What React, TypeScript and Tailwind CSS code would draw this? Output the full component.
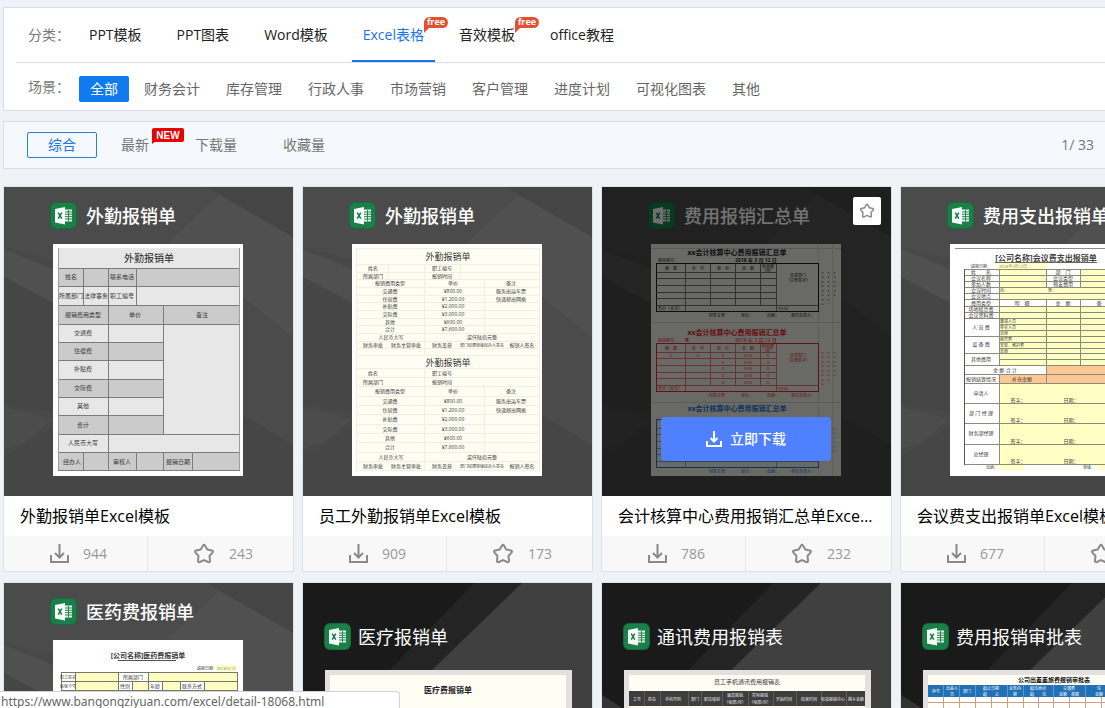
import React from "react";

type Anchor = "start" | "middle" | "end";

const INK = "#3a3a3a";

function T({
  x,
  y,
  s = 6,
  a = "middle",
  c = INK,
  b = false,
  children,
}: {
  x: number;
  y: number;
  s?: number;
  a?: Anchor;
  c?: string;
  b?: boolean;
  children: React.ReactNode;
}) {
  return (
    <text x={x} y={y} fontSize={s} textAnchor={a} fill={c} fontWeight={b ? 700 : 400} dominantBaseline="central">
      {children}
    </text>
  );
}

function H({ ys, x1, x2, c }: { ys: number[]; x1: number; x2: number; c: string }) {
  return <path d={ys.map((y) => `M${x1} ${y + 0.5}H${x2}`).join("")} stroke={c} fill="none" />;
}

function V({ xs, y1, y2, c }: { xs: number[]; y1: number; y2: number; c: string }) {
  return <path d={xs.map((x) => `M${x + 0.5} ${y1}V${y2}`).join("")} stroke={c} fill="none" />;
}

function ExcelMark({ x, y }: { x: number; y: number }) {
  return (
    <g transform={`translate(${x} ${y})`}>
      <rect width="27" height="27" rx="6" fill="#146c3c" />
      <rect x="1" y="1" width="25" height="25" rx="5" fill="#1a7f48" />
      <path d="M14 7.500h8v12H14z" fill="#e6f1ea" />
      <path d="M15 10h7M15 12.300h7M15 14.600h7M15 17h7M18.500 8v11" stroke="#1a7f48" strokeWidth="0.9" />
      <path d="M5 7l10-2v17.500L5 20.500z" fill="#f4faf6" />
      <path d="M8.200 10.600l3.600 6M11.800 10.600l-3.600 6" stroke="#187a45" strokeWidth="1.5" />
    </g>
  );
}

function GreyBackdrop() {
  return (
    <g>
      <rect width="289" height="309" fill="#484848" />
      <path d="M0 0H289V190L200 110L0 60z" fill="#4b4b4b" />
      <path d="M165 55L215 8L289 50V180L240 120z" fill="#505050" />
      <path d="M203 0H289V50z" fill="#454545" />
      <path d="M0 62L49 82V116L0 90z" fill="#505050" />
      <path d="M0 90L49 116V225L0 218z" fill="#464646" />
      <path d="M0 220L49 232L20 256L0 262z" fill="#4c4c4c" />
      <path d="M239 228L289 258V309H0V270L49 240z" fill="#464646" />
      <path d="M239 110L289 150V258L239 228z" fill="#4b4b4b" />
    </g>
  );
}

function DarkBackdrop() {
  return (
    <g>
      <rect width="289" height="309" fill="#1a1a1a" />
      <path d="M171 0H289V309H0V176z" fill="#242424" />
      <path d="M219 0H289V309H0V212z" fill="#404040" />
      <path d="M0 112L22 126V309H0z" fill="#333333" />
    </g>
  );
}

function Art({ title, dark, children }: { title: string; dark?: boolean; children: React.ReactNode }) {
  return (
    <svg viewBox="0 0 289 309" className="block w-full" role="img" aria-label={title}>
      {dark ? <DarkBackdrop /> : <GreyBackdrop />}
      {dark ? <ExcelMark x={21} y={40} /> : <ExcelMark x={46} y={15} />}
      <text x={dark ? 55 : 82} y={dark ? 54 : 29} fontSize="18" fontWeight={dark ? 400 : 500} fill="#ffffff" dominantBaseline="central">
        {title}
      </text>
      {dark ? (
        <g>
          <rect x="22" y="87" width="247" height="222" fill="#e4e0df" />
          <rect x="27" y="92" width="236" height="217" fill="#fdfdf4" />
        </g>
      ) : (
        <rect x="49" y="57" width="190" height="232" fill="#ffffff" />
      )}
      {children}
    </svg>
  );
}

function FieldworkSheet() {
  const line = "#7c7c7c";
  const labels: [string, number][] = [
    ["交通费", 146],
    ["住宿费", 164],
    ["补贴费", 182],
    ["交际费", 201],
    ["其他", 219],
    ["合计", 238],
  ];
  return (
    <g>
      <rect x="54" y="61" width="182" height="222" fill="#e7e7e7" />
      <path d="M54 81H236V99H54zM54 118H236V137H54zM54 155H159V173H54zM54 192H159V210H54zM54 228H159V247H54zM54 265H236V283H54z" fill="#cbcbcb" />
      <H ys={[81, 99, 118, 137, 247, 265, 283]} x1={54} x2={236} c={line} />
      <H ys={[155, 173, 192, 210, 228]} x1={54} x2={159} c={line} />
      <V xs={[79, 132]} y1={81} y2={118} c={line} />
      <V xs={[104]} y1={81} y2={283} c={line} />
      <V xs={[159]} y1={118} y2={247} c={line} />
      <V xs={[79, 132, 159, 188]} y1={265} y2={283} c={line} />
      <V xs={[54, 235]} y1={61} y2={283} c="#9c9c9c" />
      <T x={145} y={71} s={10} c="#222222">外勤报销单</T>
      <T x={67} y={90}>姓名</T>
      <T x={118} y={90}>联系电话</T>
      <T x={67} y={109}>所属部门</T>
      <T x={92} y={109}>法律事务</T>
      <T x={118} y={109}>职工编号</T>
      <T x={79} y={128}>报销费用类型</T>
      <T x={131} y={128}>单价</T>
      <T x={198} y={128}>备注</T>
      {labels.map(([text, y]) => (
        <T key={text} x={79} y={y}>{text}</T>
      ))}
      <T x={79} y={256}>人民币大写</T>
      <T x={68} y={275}>经办人</T>
      <T x={118} y={275}>审核人</T>
      <T x={174} y={275}>报销日期</T>
    </g>
  );
}

function ClaimBlock({ ys }: { ys: number[] }) {
  const rows: [string, string, string][] = [
    ["交通费", "¥800.00", "服务出运车票"],
    ["住宿费", "¥1,200.00", "快递邮出网络"],
    ["补贴费", "¥2,000.00", ""],
    ["交际费", "¥3,000.00", ""],
    ["其他", "¥600.00", ""],
    ["合计", "¥7,600.00", ""],
  ];
  return (
    <g>
      <T x={145} y={ys[0]} s={9}>外勤报销单</T>
      <T x={70} y={ys[1]} s={5}>姓名</T>
      <T x={139} y={ys[1]} s={5}>职工编号</T>
      <T x={70} y={ys[2]} s={5}>所属部门</T>
      <T x={139} y={ys[2]} s={5}>报销时间</T>
      <T x={87} y={ys[3]} s={5}>报销费用类型</T>
      <T x={150} y={ys[3]} s={5}>单价</T>
      <T x={208} y={ys[3]} s={5}>备注</T>
      {rows.map(([name, sum, note], i) => (
        <g key={name}>
          <T x={87} y={ys[4 + i]} s={5}>{name}</T>
          <T x={150} y={ys[4 + i]} s={5}>{sum}</T>
          {note && <T x={208} y={ys[4 + i]} s={5}>{note}</T>}
        </g>
      ))}
      <T x={88} y={ys[10]} s={5}>人民币大写</T>
      <T x={179} y={ys[10]} s={5}>柒仟陆佰元整</T>
      <T x={70} y={ys[11]} s={5}>财务审批</T>
      <T x={103} y={ys[11]} s={5}>财务主管审批</T>
      <T x={139} y={ys[11]} s={5}>财务盖章</T>
      <T x={179} y={ys[11]} s={4}>部门经理审核经办人签名</T>
      <T x={219} y={ys[11]} s={5}>报销人签名</T>
    </g>
  );
}

function StaffSheet() {
  const line = "#f3f0da";
  return (
    <g>
      <rect x="53" y="61" width="183" height="222" fill="#fdfdf3" />
      <H ys={[61, 77, 85, 92, 100, 108, 115, 123, 131, 138, 146, 154, 161, 168, 181, 190, 199, 209, 218, 227, 237, 246, 255, 265, 274, 283]} x1={53} x2={236} c={line} />
      <V xs={[53, 236]} y1={61} y2={283} c={line} />
      <V xs={[121]} y1={77} y2={168} c={line} />
      <V xs={[121]} y1={181} y2={283} c={line} />
      <V xs={[85, 157]} y1={77} y2={92} c={line} />
      <V xs={[181]} y1={92} y2={146} c={line} />
      <V xs={[181]} y1={199} y2={265} c={line} />
      <ClaimBlock ys={[69, 81, 89, 96, 104, 112, 119, 127, 135, 142, 150, 158]} />
      <ClaimBlock ys={[175, 186, 195, 204, 214, 223, 232, 242, 251, 260, 270, 279]} />
    </g>
  );
}

function SummaryBlock({ dy, c, filled, brief }: { dy: number; c: string; filled?: boolean; brief?: boolean }) {
  return (
    <g transform={`translate(0 ${dy})`}>
      <T x={135} y={65} s={7} c={c} b>xx会计核算中心费用报销汇总单</T>
      {!brief && (
        <g>
          <T x={66} y={73} s={4} c={c}>报销单位：</T>
          {filled && <T x={85} y={73} s={4} c={c} b>章</T>}
          <T x={154} y={73} s={5} c={c} b={!filled}>2018 年 3 月 12 日</T>
        </g>
      )}
      <rect x="54.500" y="76.500" width="162" height="48" fill="none" stroke={c} />
      <g opacity="0.6">
        <H ys={[85, 91, 98, 105, 111]} x1={54} x2={174} c={c} />
        <H ys={[118]} x1={54} x2={216} c={c} />
        <V xs={[83]} y1={76} y2={124} c={c} />
        <V xs={[108, 133, 158]} y1={76} y2={118} c={c} />
        <V xs={[174]} y1={76} y2={124} c={c} />
      </g>
      {!brief && (
        <g>
          <T x={69} y={81} s={4} c={c}>摘　要</T>
          <T x={96} y={81} s={4} c={c}>外　币</T>
          <T x={121} y={81} s={4} c={c}>单　价</T>
          <T x={146} y={81} s={4} c={c}>金　额</T>
          <T x={166} y={79} s={4} c={c}>附单据</T>
          <T x={166} y={83} s={4} c={c}>（张）</T>
          <T x={196} y={88} s={4} c={c}>负责部门</T>
          <T x={196} y={93} s={4} c={c}>（主管签字）</T>
          {filled && <T x={69} y={88} s={4} c={c}>0</T>}
          {filled && <T x={96} y={88} s={4} c={c}>0</T>}
          {filled &&
            [88, 95, 101, 108, 115].map((y) => (
              <g key={y}>
                <T x={121} y={y} s={4} c={c}>0</T>
                <T x={146} y={y} s={4} c={c}>0.00</T>
                <T x={166} y={y} s={4} c={c}>0</T>
              </g>
            ))}
          <T x={68} y={121} s={4} c={c}>合计（大写）</T>
          <T x={181} y={121} s={4} c={c}>¥0.00</T>
        </g>
      )}
      <path d="M220.500 85v34M226.500 85v32M232.500 85v26" stroke={c} strokeWidth="1.500" strokeDasharray="1.500 3" opacity="0.5" />
      <T x={115} y={128} s={4} c={c}>财务主管</T>
      <T x={145} y={128} s={4} c={c}>审计：</T>
      <T x={171} y={128} s={4} c={c}>出纳：</T>
      <T x={201} y={128} s={4} c={c}>单位负责人：</T>
    </g>
  );
}

function SummarySheet() {
  return (
    <g>
      <rect x="49" y="57" width="190" height="232" fill="#e8e8e2" />
      <H ys={[61, 135, 215]} x1={49} x2={239} c="#c8c8c2" />
      <V xs={[216, 230]} y1={57} y2={289} c="#d0d0ca" />
      <SummaryBlock dy={0} c="#1c1c1c" />
      <SummaryBlock dy={80} c="#e02424" filled />
      <SummaryBlock dy={156} c="#1f70d0" brief />
    </g>
  );
}

function MeetingSheet() {
  const line = "#8c8c7c";
  const left: [string, number][] = [
    ["姓　　名", 85],
    ["会议名称", 91],
    ["参加人数", 97],
    ["会议时间", 103],
    ["会议地点", 109],
    ["费用类型", 116],
    ["场地租赁费", 122],
    ["会议资料费", 128],
    ["人 员 费", 140],
    ["设 备 费", 157],
    ["其他费用", 172],
    ["申请人", 206],
    ["部 门 经 理", 226],
    ["财务部经理", 246],
    ["总经理", 267],
  ];
  const items: [string, number][] = [
    ["邀请人员", 134],
    ["参会人员", 140],
    ["其他", 146],
    ["租赁费", 152],
    ["安装、维护费", 158],
    ["其他", 164],
  ];
  return (
    <g>
      <H ys={[61]} x1={54} x2={235} c="#8c8c8c" />
      <T x={145} y={70} s={8} b c="#444444">[公司名称]会议费支出报销单</T>
      <path d="M94 75.500h102" stroke="#666666" />
      <T x={80} y={79} s={4}>填报日期：</T>
      <path d="M97 76h49v6H97z" fill="#ffffc8" />
      <T x={98} y={79} s={4} a="start" c="#8a8a50">2018年5月12日</T>
      <path d="M98 82h128v195H98zM97 278h26v5H97zM196 278h30v5h-30z" fill="#ffffc4" />
      <path d="M145 82h34v18h-34zM98 112h128v7H98z" fill="#ffffff" />
      <path d="M145 178h81v9h-81zM98 187h128v9H98z" fill="#fdc793" />
      <path d="M63 178h82v9H63z" fill="#ffffff" />
      <H ys={[82, 88, 94, 100, 106, 112, 119, 125, 131, 166, 178, 187, 196, 216, 236, 257, 277]} x1={63} x2={226} c={line} />
      <H ys={[149]} x1={63} x2={226} c={line} />
      <H ys={[137, 143, 155, 161, 172]} x1={98} x2={226} c={line} />
      <V xs={[63, 226]} y1={82} y2={278} c="#555555" />
      <V xs={[98]} y1={82} y2={178} c={line} />
      <V xs={[98]} y1={187} y2={277} c={line} />
      <V xs={[145, 179]} y1={82} y2={100} c={line} />
      <V xs={[145, 179]} y1={112} y2={178} c={line} />
      <V xs={[145]} y1={178} y2={196} c={line} />
      {left.map(([text, y]) => (
        <T key={text} x={80} y={y} s={5}>{text}</T>
      ))}
      <T x={162} y={85} s={5}>部　门</T>
      <T x={162} y={91} s={5}>会议类型</T>
      <T x={162} y={97} s={5}>预支费用</T>
      <T x={99} y={103} s={4} a="start">自：</T>
      <T x={147} y={103} s={4} a="start">至：</T>
      <T x={121} y={116} s={5}>明　细</T>
      <T x={162} y={116} s={5}>金　额</T>
      <T x={198} y={116} s={5}>备</T>
      {items.map(([text, y]) => (
        <T key={y} x={99} y={y} s={4} a="start">{text}</T>
      ))}
      <T x={104} y={183} s={5}>金 额 合 计</T>
      <T x={80} y={192} s={5}>报销结算情况</T>
      <T x={121} y={192} s={5}>补充金额</T>
      {[213, 233, 254, 274].map((y) => (
        <g key={y}>
          <T x={117} y={y} s={5}>签字：</T>
          <T x={170} y={y} s={5}>日期：</T>
        </g>
      ))}
      <T x={91} y={280} s={4}>出纳：</T>
      <T x={188} y={280} s={4}>审核：</T>
    </g>
  );
}

function MedicineSheet() {
  const line = "#77776c";
  return (
    <g>
      <T x={144} y={72} s={7} b>[公司名称]医药费报销单</T>
      <path d="M114 77.500h58" stroke="#555555" />
      <T x={203} y={85} s={4}>填报日期：</T>
      <path d="M213 82h19v6h-19z" fill="#ffffc4" />
      <T x={222} y={85} s={4} c="#8a8a50">2018/5/12</T>
      <path d="M57 89h176v52H57z" fill="#ffffc4" />
      <path d="M57 89h14v52H57zM114 89h30v9h-30zM114 98h14v9h-14zM144 98h14v9h-14zM176 98h24v9h-24z" fill="#ffffff" />
      <H ys={[89, 98, 107, 116]} x1={57} x2={233} c={line} />
      <V xs={[57, 71, 114, 233]} y1={89} y2={141} c={line} />
      <V xs={[144]} y1={89} y2={107} c={line} />
      <V xs={[128, 158, 176, 200]} y1={98} y2={107} c={line} />
      <T x={64} y={94} s={4}>职工姓名</T>
      <T x={129} y={94} s={5}>所属部门</T>
      <T x={64} y={103} s={4}>医保卡号</T>
      <T x={121} y={103} s={5}>性别</T>
      <T x={151} y={103} s={5}>年龄</T>
      <T x={188} y={103} s={5}>联系方式</T>
    </g>
  );
}

function TreatmentSheet() {
  return <T x={145} y={106} s={8} b c="#222222">医疗费报销单</T>;
}

function PhoneSheet() {
  const heads: [string, number][] = [
    ["工号", 35],
    ["姓名", 50],
    ["手机号码", 71],
    ["部门", 93],
    ["职位级别", 110],
    ["开始时间", 182],
    ["结束时间", 207],
    ["有效报销中心", 231],
    ["剩余金额", 254],
  ];
  return (
    <g>
      <T x={145} y={99} s={6}>员工手机通讯费用报销表</T>
      <rect x="27" y="108" width="236" height="15" fill="#3e3e3e" />
      <V xs={[42, 58, 86, 99, 120, 146, 171, 194, 219, 244]} y1={108} y2={123} c="#5c5c5c" />
      {heads.map(([text, x]) => (
        <T key={text} x={x} y={116} s={4} c="#ececec">{text}</T>
      ))}
      <T x={133} y={112} s={4} c="#ececec">最高报销</T>
      <T x={133} y={119} s={4} c="#ececec">（每部/月）</T>
      <T x={158} y={112} s={4} c="#ececec">实际报销</T>
      <T x={158} y={119} s={4} c="#ececec">（每部/月）</T>
    </g>
  );
}

function TravelSheet() {
  const stacked: [string, string, number][] = [
    ["出差人", "员", 51],
    ["起止日期", "起　　止", 90],
    ["业务内", "容", 114],
    ["起讫地点", "起　　讫", 137],
    ["交通费", "金额　单据", 168],
    ["住", "金额", 198],
  ];
  return (
    <g>
      <T x={153} y={97} s={6} b c="#111111">公司出差差旅费报销审批表</T>
      <rect x="27" y="102" width="236" height="12" fill="#2270b6" />
      <rect x="27" y="114" width="236" height="30" fill="#fffefa" />
      <H ys={[119, 125]} x1={27} x2={263} c="#c9a08c" />
      <V xs={[42, 58, 74, 90, 106, 122, 137, 152, 168, 184, 200]} y1={114} y2={140} c="#c9a08c" />
      <V xs={[42, 58, 74, 106, 122, 152, 184]} y1={102} y2={114} c="#5a97cc" />
      <T x={35} y={108} s={4} c="#ffffff">序号</T>
      <T x={66} y={108} s={4} c="#ffffff">部门</T>
      {stacked.map(([top, bottom, x]) => (
        <g key={top}>
          <T x={x} y={105} s={4} c="#ffffff">{top}</T>
          <T x={x} y={111} s={4} c="#ffffff">{bottom}</T>
        </g>
      ))}
    </g>
  );
}

function DownloadIcon() {
  return (
    <svg width="19" height="19" viewBox="0 0 19 19" fill="none" stroke="currentColor" strokeWidth="2" aria-hidden="true">
      <path d="M1 11v7h17v-7M9.500 0v13M5 9l4.500 4.500L14 9" />
    </svg>
  );
}

function StarIcon({ size = 22 }: { size?: number }) {
  return (
    <svg width={size} height={size} viewBox="0 0 22 22" fill="none" stroke="currentColor" strokeWidth="2" strokeLinejoin="round" aria-hidden="true">
      <path d="M9.900 2.700Q11 .9 12.100 2.700L14.300 6.600L18.800 7.500Q20.800 8 19.500 9.600L16.500 13L17 17.600Q17.100 19.800 15.100 19L11 17.100L6.900 19Q4.900 19.800 5 17.600L5.500 13L2.500 9.600Q1.200 8 3.200 7.500L7.700 6.600z" />
    </svg>
  );
}

function FreeBadge() {
  return (
    <span className="absolute -top-2 left-full h-[11px] w-6 rounded-t-md rounded-br-md bg-[#e2502f] text-center text-[9px] leading-[10px] font-bold text-white">
      free
      <svg className="absolute top-full left-0" width="5" height="5" viewBox="0 0 5 5" aria-hidden="true">
        <path d="M0 0h5L0 5z" fill="#e2502f" />
      </svg>
    </span>
  );
}

const categories = [
  { name: "PPT模板" },
  { name: "PPT图表" },
  { name: "Word模板" },
  { name: "Excel表格", active: true, free: true },
  { name: "音效模板", free: true },
  { name: "office教程" },
];

const scenes = ["全部", "财务会计", "库存管理", "行政人事", "市场营销", "客户管理", "进度计划", "可视化图表", "其他"];

interface Template {
  cover: string;
  dark?: boolean;
  sheet: React.ReactNode;
  name?: string;
  downloads?: number;
  stars?: number;
  hovered?: boolean;
}

const templates: Template[] = [
  { cover: "外勤报销单", sheet: <FieldworkSheet />, name: "外勤报销单Excel模板", downloads: 944, stars: 243 },
  { cover: "外勤报销单", sheet: <StaffSheet />, name: "员工外勤报销单Excel模板", downloads: 909, stars: 173 },
  { cover: "费用报销汇总单", sheet: <SummarySheet />, name: "会计核算中心费用报销汇总单Excel模板", downloads: 786, stars: 232, hovered: true },
  { cover: "费用支出报销单", sheet: <MeetingSheet />, name: "会议费支出报销单Excel模板", downloads: 677, stars: 156 },
  { cover: "医药费报销单", sheet: <MedicineSheet /> },
  { cover: "医疗报销单", sheet: <TreatmentSheet />, dark: true },
  { cover: "通讯费用报销表", sheet: <PhoneSheet />, dark: true },
  { cover: "费用报销审批表", sheet: <TravelSheet />, dark: true },
];

function Card({ item }: { item: Template }) {
  return (
    <article className="border border-[#dde1e8] bg-white">
      <div className="relative">
        <Art title={item.cover} dark={item.dark}>
          {item.sheet}
        </Art>
        {item.hovered && (
          <div className="absolute inset-0 bg-black/55">
            <button type="button" aria-label="收藏" className="absolute top-[10px] right-[10px] flex h-7 w-7 items-center justify-center rounded-xs bg-white text-[#8a8a8a]">
              <StarIcon size={16} />
            </button>
            <button type="button" className="absolute bottom-[35px] left-[59px] flex h-11 w-[170px] items-center justify-center gap-2 rounded bg-[#4f80ff] text-sm font-medium text-white">
              <svg width="16" height="16" viewBox="0 0 16 16" fill="none" stroke="currentColor" strokeWidth="2" aria-hidden="true">
                <path d="M1 10v5h14v-5M8 0v10M4.500 7L8 10.500L11.500 7" />
              </svg>
              立即下载
            </button>
          </div>
        )}
      </div>
      {item.name && (
        <>
          <h3 className="h-10 truncate px-4 text-base leading-10 text-black">
            <a href="#detail">{item.name}</a>
          </h3>
          <div className="grid h-[35px] grid-cols-[144px_1fr] bg-[#f8f8f9] text-sm text-[#999]">
            <span className="flex items-center gap-[14px] border-r border-[#e8eaee] pl-[46px]">
              <span className="text-[#8a8a8a]"><DownloadIcon /></span>
              {item.downloads}
            </span>
            <span className="flex items-center gap-[14px] pl-[45px]">
              <span className="text-[#8a8a8a]"><StarIcon /></span>
              {item.stars}
            </span>
          </div>
        </>
      )}
    </article>
  );
}

export default function App() {
  return (
    <div className="relative h-screen overflow-hidden bg-[#eff2f6] pt-[7px] pl-[3px] font-['Open_Sans','Noto_Sans_CJK_SC',sans-serif] text-sm text-[#666]">
      <section className="border border-r-0 border-[#d5dcea] bg-white pl-3">
        <div className="flex h-[55px] items-center border-b border-[#d5dcea] pl-3">
          <span className="w-[50px] text-[#777]">分类：</span>
          <nav className="flex gap-[13px] self-stretch text-[#222]">
            {categories.map((c) => (
              <a
                key={c.name}
                href="#category"
                className={
                  c.active
                    ? "flex items-center border-t-2 border-b-2 border-t-transparent border-b-[#1a73e8] px-[11px] text-[#1a73e8]"
                    : "flex items-center border-y-2 border-transparent px-[11px]"
                }
              >
                <span className="relative">
                  {c.name}
                  {c.free && <FreeBadge />}
                </span>
              </a>
            ))}
          </nav>
        </div>
        <div className="flex h-[47px] items-center pl-3">
          <span className="w-[51px] text-[#777]">场景：</span>
          <nav className="flex gap-1 pt-1">
            {scenes.map((s, i) => (
              <a key={s} href="#scene" className={i === 0 ? "rounded-xs bg-[#0f7bef] px-[11px] leading-[26px] text-white" : "px-[11px] leading-[26px]"}>
                {s}
              </a>
            ))}
          </nav>
        </div>
      </section>

      <section className="mt-[10px] flex h-12 items-center border border-r-0 border-[#d5dcea] bg-[#f5f9fd] pr-[11px] pl-[23px] text-[#777]">
        <button type="button" className="h-[26px] w-[70px] rounded-xs border border-[#2d7fd6] text-[#1a73e8]">
          综合
        </button>
        <button type="button" className="relative ml-6">
          最新
          <span className="absolute -top-[7px] left-[31px] h-[14px] w-8 rounded-xs bg-[#e60000] text-center font-['Liberation_Sans',sans-serif] text-[10px] leading-[15px] font-bold text-white">
            NEW
            <svg className="absolute top-[13px] left-0" width="4" height="3" viewBox="0 0 4 3" aria-hidden="true">
              <path d="M0 0h4L0 3z" fill="#e60000" />
            </svg>
          </span>
        </button>
        <button type="button" className="ml-[46px]">下载量</button>
        <button type="button" className="ml-[46px]">收藏量</button>
        <span className="ml-auto">1/ 33</span>
      </section>

      <main className="mt-[17px] grid grid-cols-[repeat(4,291px)] gap-x-2 gap-y-[10px]">
        {templates.map((t, i) => (
          <Card key={i} item={t} />
        ))}
      </main>

      <div className="absolute bottom-0 left-0 h-[17px] w-[400px] overflow-hidden rounded-tr border-t border-r border-[#cfd2d6] bg-white pt-[2px] pl-px font-['Noto_Sans',sans-serif] text-xs text-[#666]">
        https://www.bangongziyuan.com/excel/detail-18068.html
      </div>
    </div>
  );
}
